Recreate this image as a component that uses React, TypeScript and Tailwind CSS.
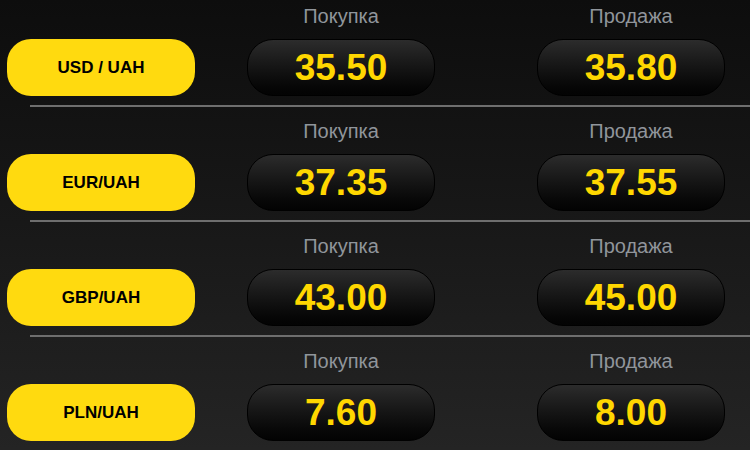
const rates = [
  { pair: "USD / UAH", buy: "35.50", sell: "35.80" },
  { pair: "EUR/UAH", buy: "37.35", sell: "37.55" },
  { pair: "GBP/UAH", buy: "43.00", sell: "45.00" },
  { pair: "PLN/UAH", buy: "7.60", sell: "8.00" },
];

function Price({ label, value }: { label: string; value: string }) {
  return (
    <div className="flex w-[188px] flex-col items-center">
      <div className="h-[24px] text-[20px] leading-[24px] text-[#90959b]">{label}</div>
      <div className="mt-[11px] flex h-[57px] w-full items-center justify-center rounded-[26px] border border-black bg-gradient-to-b from-[#2c2c2c] to-[#030303]">
        <span className="text-[37px] font-bold leading-none text-[#ffd700]">{value}</span>
      </div>
    </div>
  );
}

export default function App() {
  return (
    <div className="h-[450px] w-[750px] overflow-hidden bg-gradient-to-b from-[#0d0d0d] to-[#242424] font-['Liberation_Sans',Arial,sans-serif]">
      {rates.map((r, i) => (
        <div key={r.pair} className="pt-[4px] pb-[8px]">
          <div className="flex items-end pl-[7px]">
            <div className="flex h-[57px] w-[188px] items-center justify-center rounded-[24px] bg-[#ffda0f]">
              <span className="text-[17px] font-bold text-black">{r.pair}</span>
            </div>
            <div className="ml-[52px]">
              <Price label="Покупка" value={r.buy} />
            </div>
            <div className="ml-[102px]">
              <Price label="Продажа" value={r.sell} />
            </div>
          </div>
          {i < rates.length - 1 && <div className="ml-[30px] mt-[9px] h-[2px] bg-[#6e6e6e]" />}
        </div>
      ))}
    </div>
  );
}
